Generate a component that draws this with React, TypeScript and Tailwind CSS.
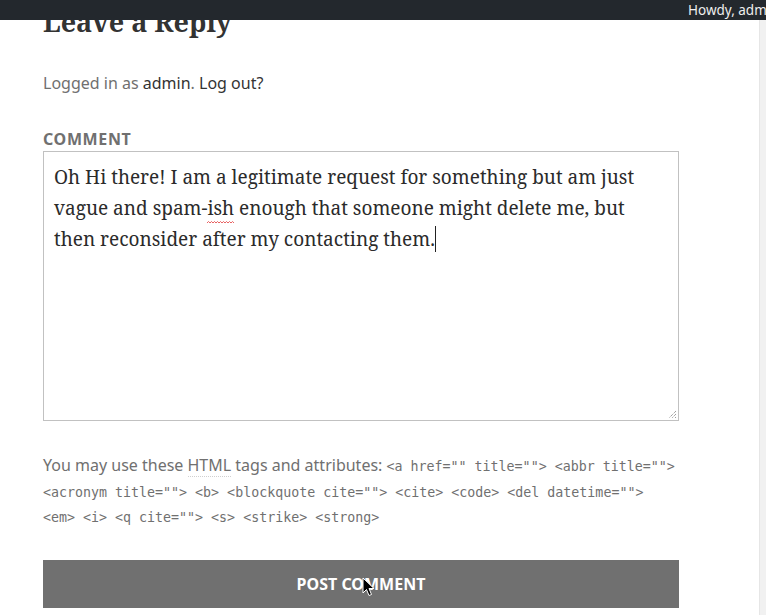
const sans = "font-['Noto_Sans','Open_Sans','DejaVu_Sans',sans-serif]";
const serif = "font-['Noto_Serif','DejaVu_Serif','Liberation_Serif',serif]";
const mono = "font-['DejaVu_Sans_Mono','Liberation_Mono',monospace]";

const tagLines = [
  '<a href="" title=""> <abbr title="">',
  '<acronym title=""> <b> <blockquote cite=""> <cite> <code> <del datetime="">',
  '<em> <i> <q cite=""> <s> <strike> <strong>',
];

function AdminBar() {
  return (
    <div className="absolute top-0 left-0 right-0 h-[20px] bg-[#23282d] flex items-center overflow-hidden">
      <span className={`${sans} ml-[688px] text-[13.5px] leading-[20px] text-[#eeeeee] whitespace-nowrap`}>
        Howdy, admin
      </span>
    </div>
  );
}

function Squiggle() {
  return (
    <svg className="absolute left-0 bottom-[-3px]" width="28" height="3" viewBox="0 0 28 3">
      <path d="M0 2 L1.5 0.5 L3 2 L4.5 0.5 L6 2 L7.5 0.5 L9 2 L10.5 0.5 L12 2 L13.5 0.5 L15 2 L16.5 0.5 L18 2 L19.5 0.5 L21 2 L22.5 0.5 L24 2 L25.5 0.5 L27 2" fill="none" stroke="#e23b3b" strokeWidth="0.8" />
    </svg>
  );
}

function CommentBox() {
  return (
    <div className={`relative h-[270px] border border-[#c1c1c1] bg-white px-[10px] pt-[10px] ${serif} text-[19px] leading-[31px] text-[#2b2b2b]`}>
      <div>Oh Hi there! I am a legitimate request for something but am just</div>
      <div>
        vague and spam-<span className="relative">ish<Squiggle /></span> enough that someone might delete me, but
      </div>
      <div>
        then reconsider after my contacting them.
        <span className="inline-block w-px h-[26px] bg-[#222] align-[-6px]" />
      </div>
      <svg className="absolute right-[1px] bottom-[1px]" width="9" height="9" viewBox="0 0 9 9">
        <path d="M8 1 L1 8 M8 4 L4 8 M8 7 L7 8" stroke="#777" strokeWidth="1" strokeDasharray="1 1" />
      </svg>
    </div>
  );
}

function Cursor() {
  return (
    <svg className="absolute left-[362px] top-[577px]" width="14" height="21" viewBox="0 0 14 21">
      <path d="M1 1 L1 16 L4.5 12.5 L7 18.5 L9.5 17.5 L7 11.5 L12 11.5 Z" fill="#000" stroke="#fff" strokeWidth="1" strokeLinejoin="round" />
    </svg>
  );
}

export default function App() {
  return (
    <div className="relative w-[766px] h-[615px] overflow-hidden bg-white flex">
      <div className="w-[759px] pl-[43px] pr-[80px]">
        <h3 className={`${serif} font-bold text-[27px] leading-[34px] text-[#333333] pt-[5px]`}>
          Leave a Reply
        </h3>
        <p className={`${sans} mt-[32px] text-[16px] leading-[24px] text-[#707070]`}>
          Logged in as <span className="text-[#333333]">admin</span>. <span className="text-[#333333]">Log out?</span>
        </p>
        <div className={`${sans} mt-[32px] text-[16px] leading-[24px] font-bold uppercase tracking-[0.04em] text-[#707070]`}>
          Comment
        </div>
        <CommentBox />
        <div className={`${sans} mt-[32px] text-[16px] leading-[25.5px] text-[#707070]`}>
          You may use these <span className="border-b border-dotted border-[#d0d0d0]">HTML</span> tags and attributes:{" "}
          <code className={`${mono} text-[13.3px] leading-none`}>{tagLines[0]}</code>
          <br />
          <code className={`${mono} text-[13.3px] leading-none`}>{tagLines[1]}</code>
          <br />
          <code className={`${mono} text-[13.3px] leading-none`}>{tagLines[2]}</code>
        </div>
        <button
          className={`${sans} mt-[30px] w-full h-[48px] bg-[#707070] text-white text-[16px] font-bold uppercase`}
        >
          Post Comment
        </button>
      </div>
      <div className="w-[7px] mt-[20px] bg-[#f1f1f1] border-l border-[#e6e6e6]" />
      <AdminBar />
      <Cursor />
    </div>
  );
}
